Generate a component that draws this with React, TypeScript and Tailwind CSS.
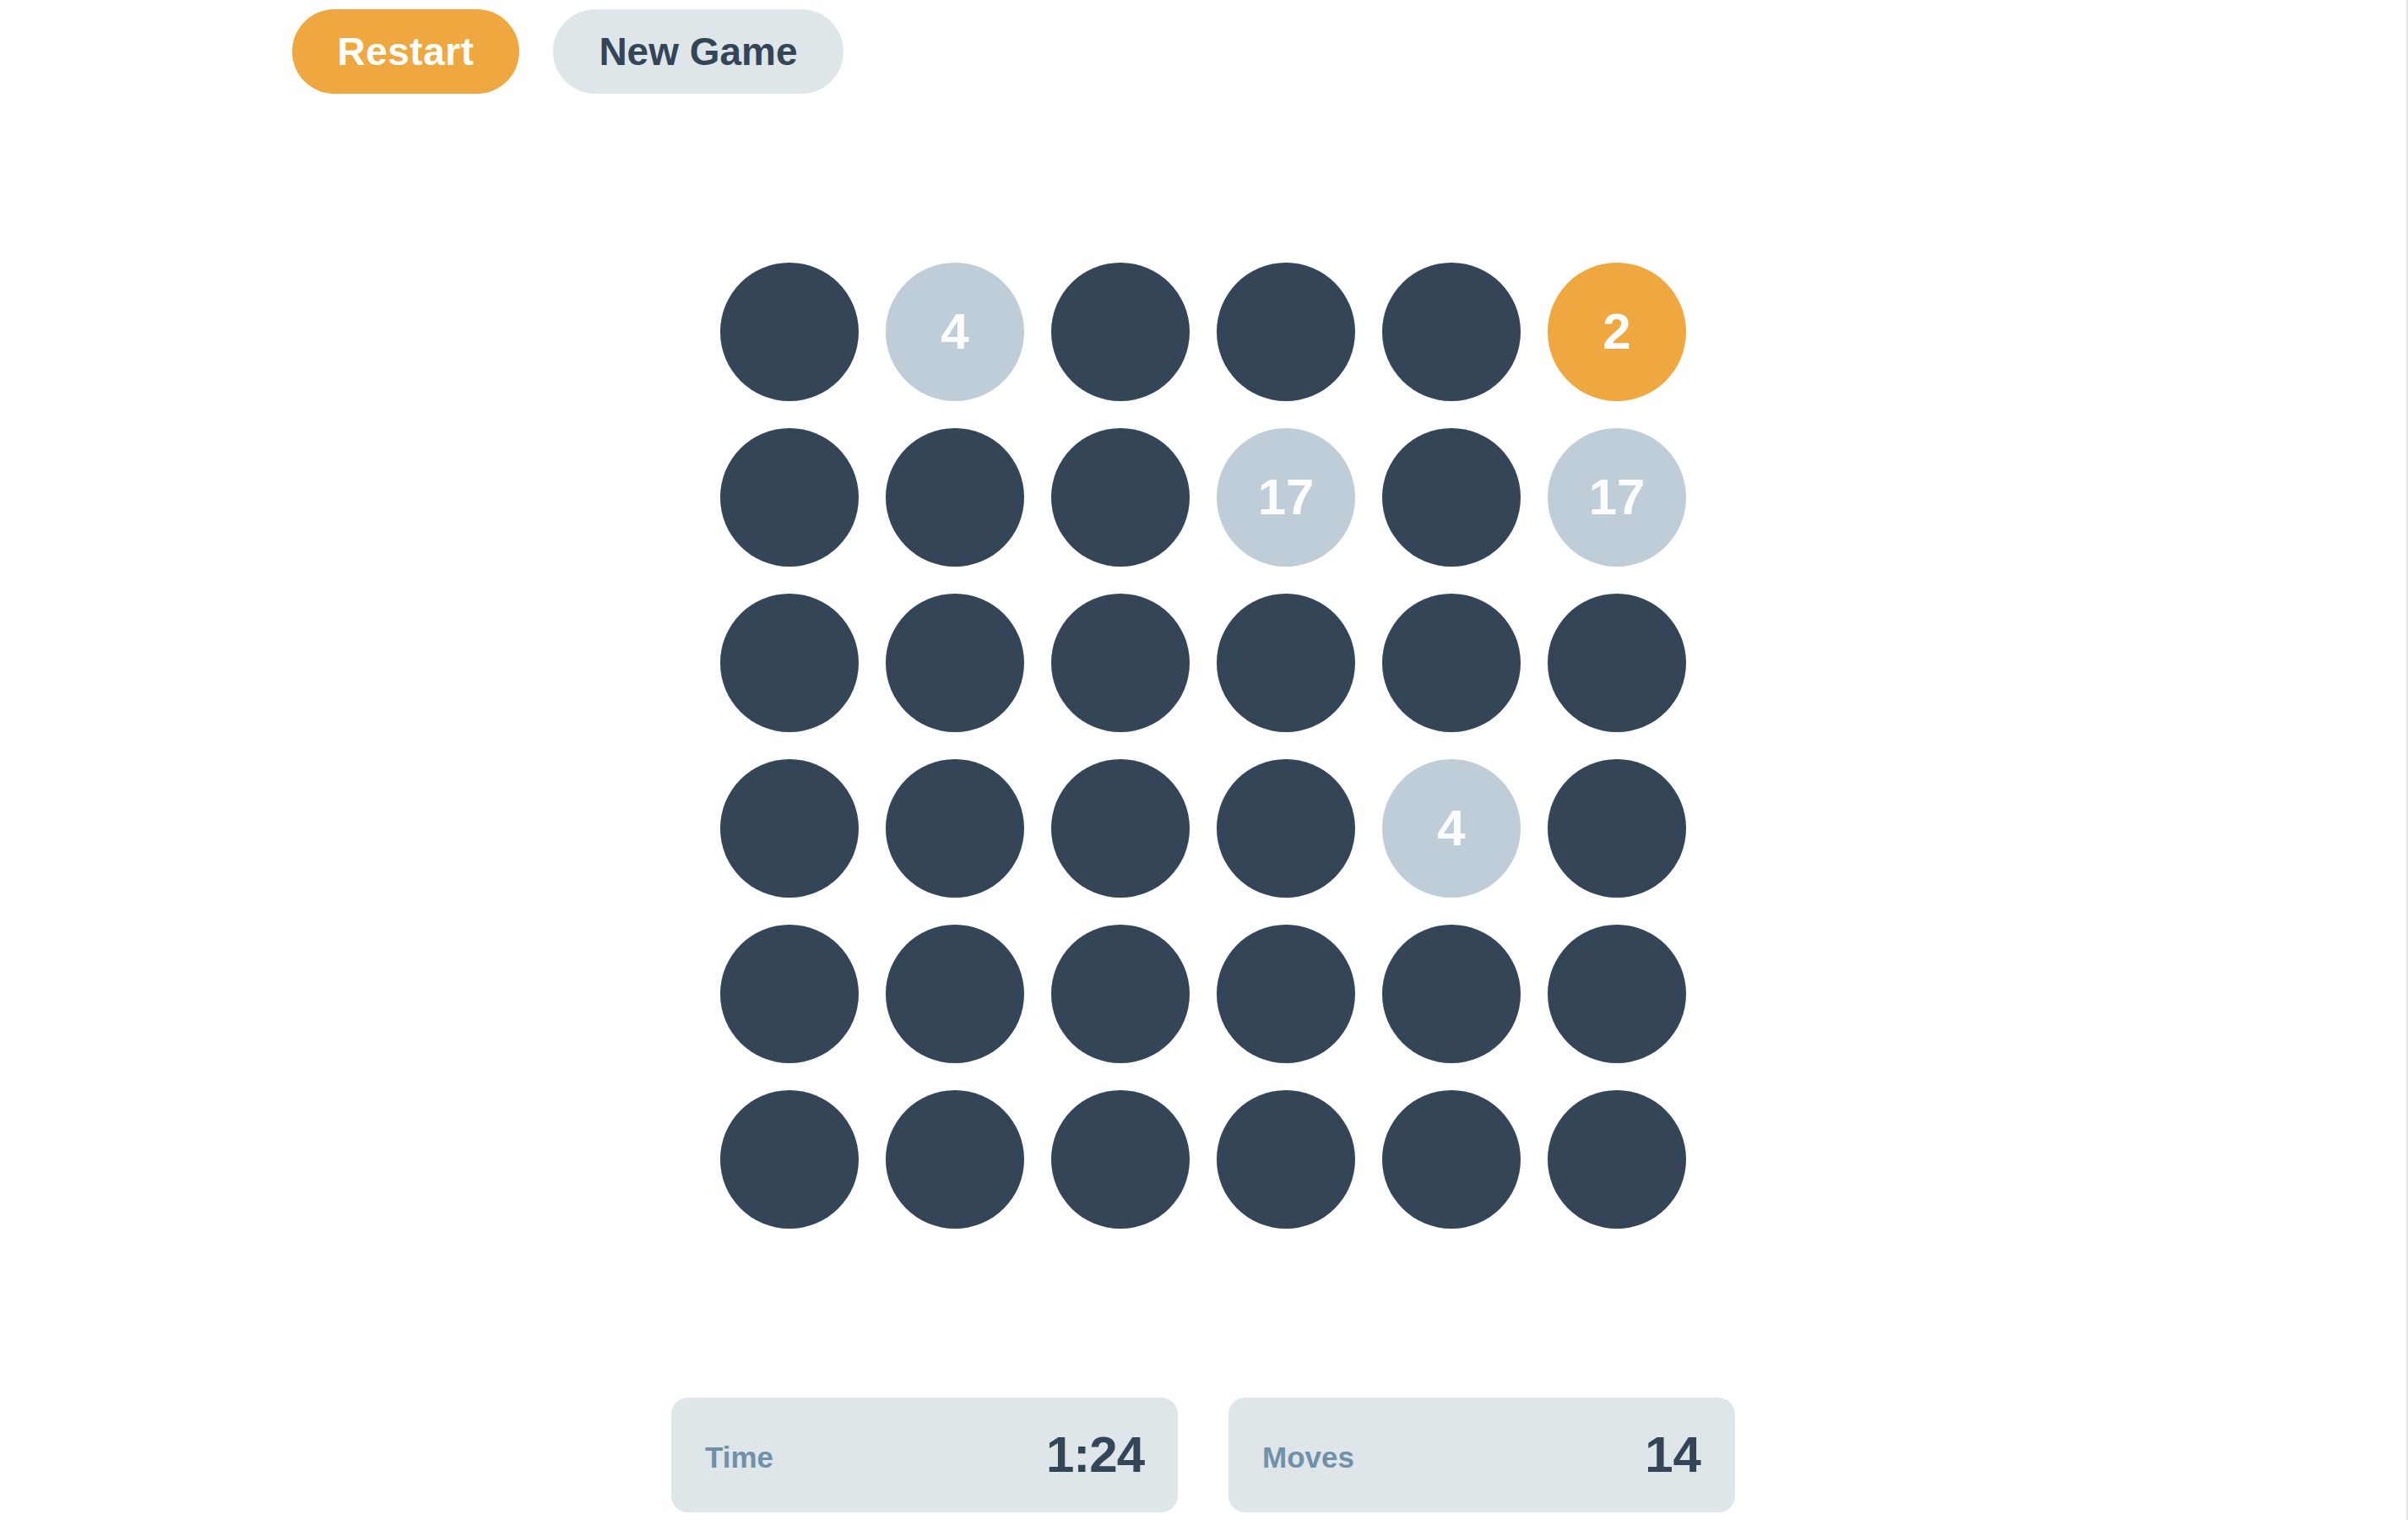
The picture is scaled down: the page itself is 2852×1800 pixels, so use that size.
import React from "react";

type Cell = { value?: number; state: "hidden" | "open" | "active" };

const board: Cell[] = [
  { state: "hidden" }, { value: 4, state: "open" }, { state: "hidden" }, { state: "hidden" }, { state: "hidden" }, { value: 2, state: "active" },
  { state: "hidden" }, { state: "hidden" }, { state: "hidden" }, { value: 17, state: "open" }, { state: "hidden" }, { value: 17, state: "open" },
  { state: "hidden" }, { state: "hidden" }, { state: "hidden" }, { state: "hidden" }, { state: "hidden" }, { state: "hidden" },
  { state: "hidden" }, { state: "hidden" }, { state: "hidden" }, { state: "hidden" }, { value: 4, state: "open" }, { state: "hidden" },
  { state: "hidden" }, { state: "hidden" }, { state: "hidden" }, { state: "hidden" }, { state: "hidden" }, { state: "hidden" },
  { state: "hidden" }, { state: "hidden" }, { state: "hidden" }, { state: "hidden" }, { state: "hidden" }, { state: "hidden" },
];

const cellColor = {
  hidden: "bg-[#344557]",
  open: "bg-[#bfcdd8]",
  active: "bg-[#efa73f]",
};

const App = () => {
  return (
    <div className="w-[2852px] h-[1800px] overflow-hidden bg-white border-r-2 border-[#e6e6e6] font-['Liberation_Sans',Arial,sans-serif]">
      {/* header buttons */}
      <div className="flex gap-[40px] pl-[346px] pt-[11px]">
        <button className="w-[269px] h-[100px] rounded-full bg-[#efa73f] text-white text-[46px] font-bold leading-none tracking-[0.5px]">
          Restart
        </button>
        <button className="w-[344px] h-[100px] rounded-full bg-[#dfe6ea] text-[#344557] text-[46px] font-bold leading-none">
          New Game
        </button>
      </div>

      {/* board */}
      <div className="mx-auto mt-[200px] w-[1144px] grid grid-cols-6 gap-[32px]">
        {board.map((c, i) => (
          <div
            key={i}
            className={`${cellColor[c.state]} w-[164px] h-[164px] rounded-full flex items-center justify-center text-[#fcfcfc] text-[60px] font-bold leading-none`}
          >
            {c.state !== "hidden" ? c.value : null}
          </div>
        ))}
      </div>

      {/* stats */}
      <div className="flex justify-center gap-[60px] mt-[200px]">
        <div className="w-[600px] h-[136px] rounded-[20px] bg-[#dfe6ea] px-[40px] flex items-center justify-between">
          <span className="text-[35px] font-bold text-[#7191a9] leading-none pt-[4px]">Time</span>
          <span className="text-[60px] font-bold text-[#344557] leading-none tracking-[-1px]">1:24</span>
        </div>
        <div className="w-[600px] h-[136px] rounded-[20px] bg-[#dfe6ea] px-[40px] flex items-center justify-between">
          <span className="text-[35px] font-bold text-[#7191a9] leading-none pt-[4px]">Moves</span>
          <span className="text-[60px] font-bold text-[#344557] leading-none">14</span>
        </div>
      </div>
    </div>
  );
};

export default App;
